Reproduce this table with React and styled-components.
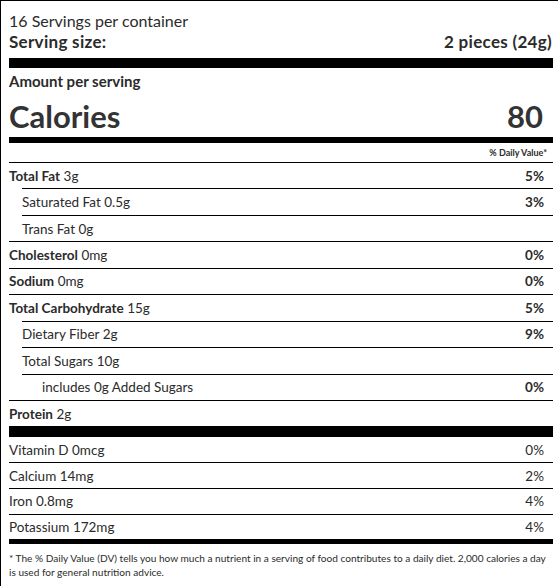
import React from 'react';
import styled, { createGlobalStyle } from 'styled-components';

const GlobalStyle = createGlobalStyle`
  html, body {
    margin: 0;
    overflow: hidden;
    background: #fff;
  }
  body {
    font-family: Lato, "Liberation Sans", sans-serif;
    color: #2b2b2b;
  }
`;

const nutrients = [
  { name: 'Total Fat', amount: '3g', dv: '5%', bold: true },
  { name: 'Saturated Fat', amount: '0.5g', dv: '3%', level: 1 },
  { name: 'Trans Fat', amount: '0g', dv: '', level: 1 },
  { name: 'Cholesterol', amount: '0mg', dv: '0%', bold: true },
  { name: 'Sodium', amount: '0mg', dv: '0%', bold: true },
  { name: 'Total Carbohydrate', amount: '15g', dv: '5%', bold: true },
  { name: 'Dietary Fiber', amount: '2g', dv: '9%', level: 1 },
  { name: 'Total Sugars', amount: '10g', dv: '', level: 1 },
  { name: 'includes 0g Added Sugars', amount: '', dv: '0%', level: 2 },
  { name: 'Protein', amount: '2g', dv: '', bold: true },
];

const vitamins = [
  { name: 'Vitamin D', amount: '0mcg', dv: '0%' },
  { name: 'Calcium', amount: '14mg', dv: '2%' },
  { name: 'Iron', amount: '0.8mg', dv: '4%' },
  { name: 'Potassium', amount: '172mg', dv: '4%' },
];

const App = () => (
  <>
    <GlobalStyle />
    <Label>
      <Servings>16 Servings per container</Servings>
      <SizeRow>
        <span>Serving size:</span>
        <SizeValue>2 pieces (24g)</SizeValue>
      </SizeRow>
      <Bar $h={10} />
      <Amount>Amount per serving</Amount>
      <CaloriesRow>
        <span>Calories</span>
        <CaloriesValue>80</CaloriesValue>
      </CaloriesRow>
      <Bar $h={6} />
      <DvHeader>% Daily Value*</DvHeader>
      {nutrients.map((n) => (
        <Row key={n.name} $level={n.level || 0}>
          <Name $level={n.level || 0}>
            {n.bold ? <b>{n.name}</b> : n.name} {n.amount}
          </Name>
          <Percent $bold={n.bold || n.level === 1 || n.level === 2}>{n.dv}</Percent>
        </Row>
      ))}
      <Bar $h={11} />
      {vitamins.map((v, i) => (
        <VitRow key={v.name} $first={i === 0}>
          <Name $level={0}>
            {v.name} {v.amount}
          </Name>
          <Percent>{v.dv}</Percent>
        </VitRow>
      ))}
      <Bar $h={5} />
      <Footnote>
        * The % Daily Value (DV) tells you how much a nutrient in a serving of food contributes to
        a daily diet. 2,000 calories a day is used for general nutrition advice.
      </Footnote>
    </Label>
  </>
);

export default App;

const Label = styled.div`
  width: 544px;
  border: 1px solid #000;
  padding: 10px 8px 8px 8px;
`;

const Servings = styled.div`
  font-size: 16px;
  font-weight: 400;
  line-height: 20px;
`;

const SizeRow = styled.div`
  display: flex;
  justify-content: space-between;
  font-size: 17px;
  font-weight: 700;
  letter-spacing: 0.3px;
  line-height: 22px;
  margin: 0 0 5px;
`;

const SizeValue = styled.span`
  padding-right: 1px;
`;

const Bar = styled.div`
  height: ${(p) => p.$h}px;
  background: #000;
`;

const Amount = styled.div`
  font-size: 15px;
  font-weight: 700;
  line-height: 18px;
  margin-top: 4px;
`;

const CaloriesRow = styled.div`
  display: flex;
  justify-content: space-between;
  align-items: center;
  font-size: 31px;
  font-weight: 700;
  color: #333;
  line-height: 34px;
  margin: 9px 0 4px;
`;

const CaloriesValue = styled.span`
  padding-right: 10px;
`;

const DvHeader = styled.div`
  text-align: right;
  font-size: 9px;
  font-weight: 700;
  line-height: 19px;
  padding-right: 6px;
`;

const Row = styled.div`
  display: flex;
  justify-content: space-between;
  align-items: center;
  height: 25.45px;
  border-top: 1px solid #000;
  margin-left: ${(p) => (p.$level ? 13 : 0)}px;
  font-size: 13.5px;
`;

const VitRow = styled.div`
  display: flex;
  justify-content: space-between;
  align-items: center;
  height: 24.75px;
  border-top: ${(p) => (p.$first ? 'none' : '1px solid #000')};
  font-size: 13.5px;
`;

const Name = styled.span`
  padding-left: ${(p) => (p.$level === 2 ? 20 : 0)}px;

  b {
    font-weight: 700;
  }
`;

const Percent = styled.span`
  font-weight: ${(p) => (p.$bold ? 700 : 400)};
  padding-right: 9px;
`;

const Footnote = styled.p`
  margin: 7px 0 0;
  padding-right: 6px;
  font-size: 10.1px;
  line-height: 14px;
`;
